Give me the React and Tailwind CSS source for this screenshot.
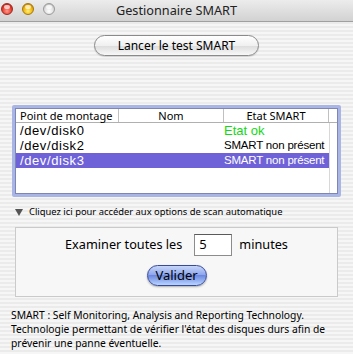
import React from 'react';

const stripes =
  'bg-[repeating-linear-gradient(to_bottom,#f6f6f6_0px,#f6f6f6_2px,#ebebeb_2px,#ebebeb_4px)]';

const Light = ({ tone }) => {
  const tones = {
    red: 'bg-[radial-gradient(circle_at_50%_70%,#ff9c8c_0%,#e8382c_55%,#a8160e_100%)] border-[#9a2a22]',
    yellow: 'bg-[radial-gradient(circle_at_50%_70%,#fff07a_0%,#f0b000_55%,#b07000_100%)] border-[#a27810]',
    gray: 'bg-[radial-gradient(circle_at_50%_70%,#ffffff_0%,#dcdcdc_55%,#a8a8a8_100%)] border-[#9a9a9a]',
  };
  return (
    <div className={`relative w-[12px] h-[12px] rounded-full border ${tones[tone]}`}>
      <div className="absolute left-[2px] top-[1px] w-[6px] h-[4px] rounded-full bg-white/70" />
    </div>
  );
};

const rows = [
  { mount: '/dev/disk0', state: 'Etat ok', ok: true },
  { mount: '/dev/disk2', state: 'SMART non présent' },
  { mount: '/dev/disk3', state: 'SMART non présent', selected: true },
];

export default function App() {
  return (
    <div
      className={`w-[353px] h-[354px] overflow-hidden text-black ${stripes}`}
      style={{ fontFamily: '"Lucida Grande", "Noto Sans", sans-serif' }}
    >
      {/* Title bar */}
      <div className="relative h-[22px] flex items-center justify-center bg-[linear-gradient(to_bottom,#ececec,#d2d2d2)] border-b border-[#a0a0a0]">
        <div className="absolute left-[1px] top-[3px] flex gap-[9px]">
          <Light tone="red" />
          <Light tone="yellow" />
          <Light tone="gray" />
        </div>
        <span className="text-[12.7px] text-[#222]">Gestionnaire SMART</span>
      </div>

      {/* Run button */}
      <div className="flex justify-center mt-[13px]">
        <button className="w-[165px] h-[21px] rounded-full border border-[#8a8a8a] bg-[linear-gradient(to_bottom,#ffffff,#f0f0f0_50%,#dcdcdc_51%,#f8f8f8)] text-[12px] leading-none shadow-[0_1px_1px_rgba(0,0,0,0.15)]">
          Lancer le test SMART
        </button>
      </div>

      {/* Disk table */}
      <div className="mx-[12px] mt-[49px] h-[92px] rounded-[2px] border-[3px] border-[#a9b5e4] bg-white">
        <div className="relative h-full bg-white border border-[#7e86b8]">
          <div className="flex h-[14px] border-b border-[#b0b0b0] text-[11px] leading-[13px]">
            <div className="w-[103px] pl-[4px] border-r border-[#c0c0c0]">Point de montage</div>
            <div className="w-[105px] text-center border-r border-[#c0c0c0]">Nom</div>
            <div className="w-[105px] text-center border-r border-[#c0c0c0]">Etat SMART</div>
            <div className="flex-1" />
          </div>
          <div className="absolute left-[313px] top-[14px] bottom-0 border-l border-[#d8d8d8]" />
          <div className="font-['Liberation_Sans',sans-serif]">
            {rows.map((r) => (
              <div
                key={r.mount}
                className={`flex h-[15px] w-[313px] leading-[15px] ${r.selected ? 'bg-[#6f62d8] text-white' : ''}`}
              >
                <div className="w-[208px] pl-[4px] text-[13px] tracking-[0.6px]">{r.mount}</div>
                <div
                  className={`w-[105px] whitespace-nowrap ${
                    r.ok ? 'text-[#14d814] text-[13px]' : 'text-[11.5px] tracking-[-0.2px]'
                  }`}
                >
                  {r.state}
                </div>
              </div>
            ))}
          </div>
        </div>
      </div>

      {/* Disclosure */}
      <div className="flex items-center ml-[15px] mt-[9px] h-[12px]">
        <div className="w-0 h-0 border-l-[4px] border-r-[4px] border-t-[7px] border-l-transparent border-r-transparent border-t-[#555]" />
        <span className="ml-[6px] text-[9.4px] leading-none">Cliquez ici pour accéder aux options de scan automatique</span>
      </div>

      {/* Options box */}
      <div className="mx-[15px] mt-[9px] h-[70px] border border-[#cacaca] bg-[#f7f7f7] flex flex-col items-center">
        <div className="flex items-center mt-[6px] h-[22px] text-[12.7px]">
          <span>Examiner toutes les</span>
          <div className="ml-[12px] w-[38px] h-[22px] bg-white border border-[#8c8c8c] border-t-[#5a5a5a] pl-[4px] text-[13px] leading-[18px]">5</div>
          <span className="ml-[7px]">minutes</span>
        </div>
        <button className="mt-[9px] w-[60px] h-[21px] rounded-full border border-[#3a4a9a] bg-[linear-gradient(to_bottom,#c7d6f8,#8fa8ee_45%,#6c88e0_50%,#b9d4ff)] text-[13px] leading-none shadow-[0_1px_2px_rgba(0,0,0,0.3)]">
          Valider
        </button>
      </div>

      {/* Footer */}
      <p className="mx-[11px] mt-[11px] text-[10.3px] leading-[14px] whitespace-nowrap">
        SMART : Self Monitoring, Analysis and Reporting Technology.
        <br />
        Technologie permettant de vérifier l'état des disques durs afin de
        <br />
        prévenir une panne éventuelle.
      </p>
    </div>
  );
}
